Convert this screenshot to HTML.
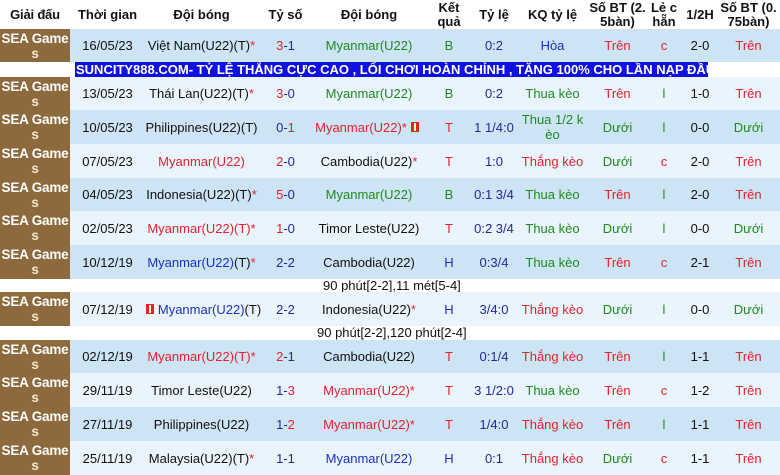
<!DOCTYPE html>
<html><head><meta charset="utf-8"><style>
*{margin:0;padding:0;box-sizing:border-box}
body{width:780px;height:475px;overflow:hidden;background:#fff;font-family:"Liberation Sans",Arial,sans-serif;font-size:13px;color:#111;position:relative}
.r{position:absolute;left:0;width:780px;display:flex}
.r>div{display:flex;align-items:center;justify-content:center;text-align:center;white-space:nowrap;flex:none}
.c1{width:70px}.c2{width:75px}.c3{width:113px}.c4{width:55px}.c5{width:112px}.c6{width:48px}.c7{width:42px}.c8{width:75px}.c9{width:55px}.c10{width:38px}.c11{width:34px}.c12{width:63px}
.h{top:0;height:29px;font-weight:bold;font-size:13px;line-height:14px}
.b{background:#cde4f5}.l{background:#eaf4fc}
.r>div.c1{background:#8c6a3e;color:#fff;font-weight:bold;font-size:13.5px;letter-spacing:-0.2px;line-height:15px;flex-direction:column;justify-content:flex-start;padding-top:2px;overflow:hidden}
.c1 span{color:#f3e6cc}
.R{color:#e0232e}.G{color:#1e8a1e}.B{color:#1c2fc4}.D{color:#202a9a}
.fl{display:inline-block;flex:none;width:8px;height:10px;background:#e02a10;position:relative;margin:0 4px}
.fl:after{content:"";position:absolute;left:3px;top:1px;width:2px;height:8px;background:#fff}
.ban{position:absolute;top:62px;left:75px;width:633px;height:15px;background:#1010e0;color:#fff;font-weight:bold;font-size:13px;line-height:15px;white-space:nowrap;overflow:hidden;padding-left:1px}
.note{position:absolute;left:0;width:780px;height:13px;line-height:13px;font-size:13px}
</style></head><body>
<div class="r h"><div class="c1" style="background:#fff;color:#111;font-size:13px;justify-content:center;padding:0">Giải đấu</div><div class="c2">Thời gian</div><div class="c3">Đội bóng</div><div class="c4">Tỷ số</div><div class="c5">Đội bóng</div><div class="c6">Kết<br>quả</div><div class="c7">Tỷ lệ</div><div class="c8">KQ tỷ lệ</div><div class="c9">Số BT (2.<br>5bàn)</div><div class="c10">Lẻ c<br>hẵn</div><div class="c11">1/2H</div><div class="c12">Số BT (0.<br>75bàn)</div></div>

<div class="r b" style="top:29px;height:33px"><div class="c1">SEA Game<span>s</span></div><div class="c2">16/05/23</div><div class="c3">Việt Nam(U22)(T)<span class="R">*</span></div><div class="c4"><span class="R">3</span><span class="D">-1</span></div><div class="c5 G">Myanmar(U22)</div><div class="c6 G">B</div><div class="c7 D">0:2</div><div class="c8 B">Hòa</div><div class="c9 R">Trên</div><div class="c10 R">c</div><div class="c11">2-0</div><div class="c12 R">Trên</div></div>
<div class="ban">SUNCITY888.COM- TỶ LỆ THẮNG CỰC CAO , LỐI CHƠI HOÀN CHỈNH , TẶNG 100% CHO LẦN NẠP ĐẦU</div>

<div class="r l" style="top:77px;height:33px"><div class="c1">SEA Game<span>s</span></div><div class="c2">13/05/23</div><div class="c3">Thái Lan(U22)(T)<span class="R">*</span></div><div class="c4"><span class="R">3</span><span class="D">-0</span></div><div class="c5 G">Myanmar(U22)</div><div class="c6 G">B</div><div class="c7 D">0:2</div><div class="c8 G">Thua kèo</div><div class="c9 R">Trên</div><div class="c10 G">l</div><div class="c11">1-0</div><div class="c12 R">Trên</div></div>

<div class="r b" style="top:110px;height:34px"><div class="c1">SEA Game<span>s</span></div><div class="c2">10/05/23</div><div class="c3">Philippines(U22)(T)</div><div class="c4"><span class="D">0-</span><span class="R">1</span></div><div class="c5 R">Myanmar(U22)*<i class="fl"></i></div><div class="c6 R">T</div><div class="c7 D">1 1/4:0</div><div class="c8 G" style="white-space:normal;line-height:15px">Thua 1/2 k<br>èo</div><div class="c9 G">Dưới</div><div class="c10 G">l</div><div class="c11">0-0</div><div class="c12 G">Dưới</div></div>

<div class="r l" style="top:144px;height:34px"><div class="c1">SEA Game<span>s</span></div><div class="c2">07/05/23</div><div class="c3 R">Myanmar(U22)</div><div class="c4"><span class="R">2</span><span class="D">-0</span></div><div class="c5">Cambodia(U22)<span class="R">*</span></div><div class="c6 R">T</div><div class="c7 D">1:0</div><div class="c8 R">Thắng kèo</div><div class="c9 G">Dưới</div><div class="c10 R">c</div><div class="c11">2-0</div><div class="c12 R">Trên</div></div>

<div class="r b" style="top:178px;height:33px"><div class="c1">SEA Game<span>s</span></div><div class="c2">04/05/23</div><div class="c3">Indonesia(U22)(T)<span class="R">*</span></div><div class="c4"><span class="R">5</span><span class="D">-0</span></div><div class="c5 G">Myanmar(U22)</div><div class="c6 G">B</div><div class="c7 D">0:1 3/4</div><div class="c8 G">Thua kèo</div><div class="c9 R">Trên</div><div class="c10 G">l</div><div class="c11">2-0</div><div class="c12 R">Trên</div></div>

<div class="r l" style="top:211px;height:34px"><div class="c1">SEA Game<span>s</span></div><div class="c2">02/05/23</div><div class="c3 R">Myanmar(U22)(T)*</div><div class="c4"><span class="R">1</span><span class="D">-0</span></div><div class="c5">Timor Leste(U22)</div><div class="c6 R">T</div><div class="c7 D">0:2 3/4</div><div class="c8 G">Thua kèo</div><div class="c9 G">Dưới</div><div class="c10 G">l</div><div class="c11">0-0</div><div class="c12 G">Dưới</div></div>

<div class="r b" style="top:245px;height:34px"><div class="c1">SEA Game<span>s</span></div><div class="c2">10/12/19</div><div class="c3 B">Myanmar(U22)<span style="color:#111">(T)</span><span class="R">*</span></div><div class="c4 D">2-2</div><div class="c5">Cambodia(U22)</div><div class="c6 B">H</div><div class="c7 D">0:3/4</div><div class="c8 G">Thua kèo</div><div class="c9 R">Trên</div><div class="c10 R">c</div><div class="c11">2-1</div><div class="c12 R">Trên</div></div>
<div class="note" style="top:279px"><span style="position:absolute;left:323px">90 phút[2-2],11 mét[5-4]</span></div>

<div class="r l" style="top:292px;height:34px"><div class="c1">SEA Game<span>s</span></div><div class="c2">07/12/19</div><div class="c3 B"><i class="fl"></i>Myanmar(U22)<span style="color:#111">(T)</span></div><div class="c4 D">2-2</div><div class="c5">Indonesia(U22)<span class="R">*</span></div><div class="c6 B">H</div><div class="c7 D">3/4:0</div><div class="c8 R">Thắng kèo</div><div class="c9 G">Dưới</div><div class="c10 G">l</div><div class="c11">0-0</div><div class="c12 G">Dưới</div></div>
<div class="note" style="top:326px"><span style="position:absolute;left:317px">90 phút[2-2],120 phút[2-4]</span></div>

<div class="r b" style="top:340px;height:33px"><div class="c1">SEA Game<span>s</span></div><div class="c2">02/12/19</div><div class="c3 R">Myanmar(U22)(T)*</div><div class="c4"><span class="R">2</span><span class="D">-1</span></div><div class="c5">Cambodia(U22)</div><div class="c6 R">T</div><div class="c7 D">0:1/4</div><div class="c8 R">Thắng kèo</div><div class="c9 R">Trên</div><div class="c10 G">l</div><div class="c11">1-1</div><div class="c12 R">Trên</div></div>

<div class="r l" style="top:373px;height:34px"><div class="c1">SEA Game<span>s</span></div><div class="c2">29/11/19</div><div class="c3">Timor Leste(U22)</div><div class="c4"><span class="D">1-</span><span class="R">3</span></div><div class="c5 R">Myanmar(U22)*</div><div class="c6 R">T</div><div class="c7 D">3 1/2:0</div><div class="c8 G">Thua kèo</div><div class="c9 R">Trên</div><div class="c10 R">c</div><div class="c11">1-2</div><div class="c12 R">Trên</div></div>

<div class="r b" style="top:407px;height:34px"><div class="c1">SEA Game<span>s</span></div><div class="c2">27/11/19</div><div class="c3">Philippines(U22)</div><div class="c4"><span class="D">1-</span><span class="R">2</span></div><div class="c5 R">Myanmar(U22)*</div><div class="c6 R">T</div><div class="c7 D">1/4:0</div><div class="c8 R">Thắng kèo</div><div class="c9 R">Trên</div><div class="c10 G">l</div><div class="c11">1-1</div><div class="c12 R">Trên</div></div>

<div class="r l" style="top:441px;height:34px"><div class="c1">SEA Game<span>s</span></div><div class="c2">25/11/19</div><div class="c3">Malaysia(U22)(T)<span class="R">*</span></div><div class="c4 D">1-1</div><div class="c5 B">Myanmar(U22)</div><div class="c6 B">H</div><div class="c7 D">0:1</div><div class="c8 R">Thắng kèo</div><div class="c9 G">Dưới</div><div class="c10 R">c</div><div class="c11">1-1</div><div class="c12 R">Trên</div></div>
</body></html>
